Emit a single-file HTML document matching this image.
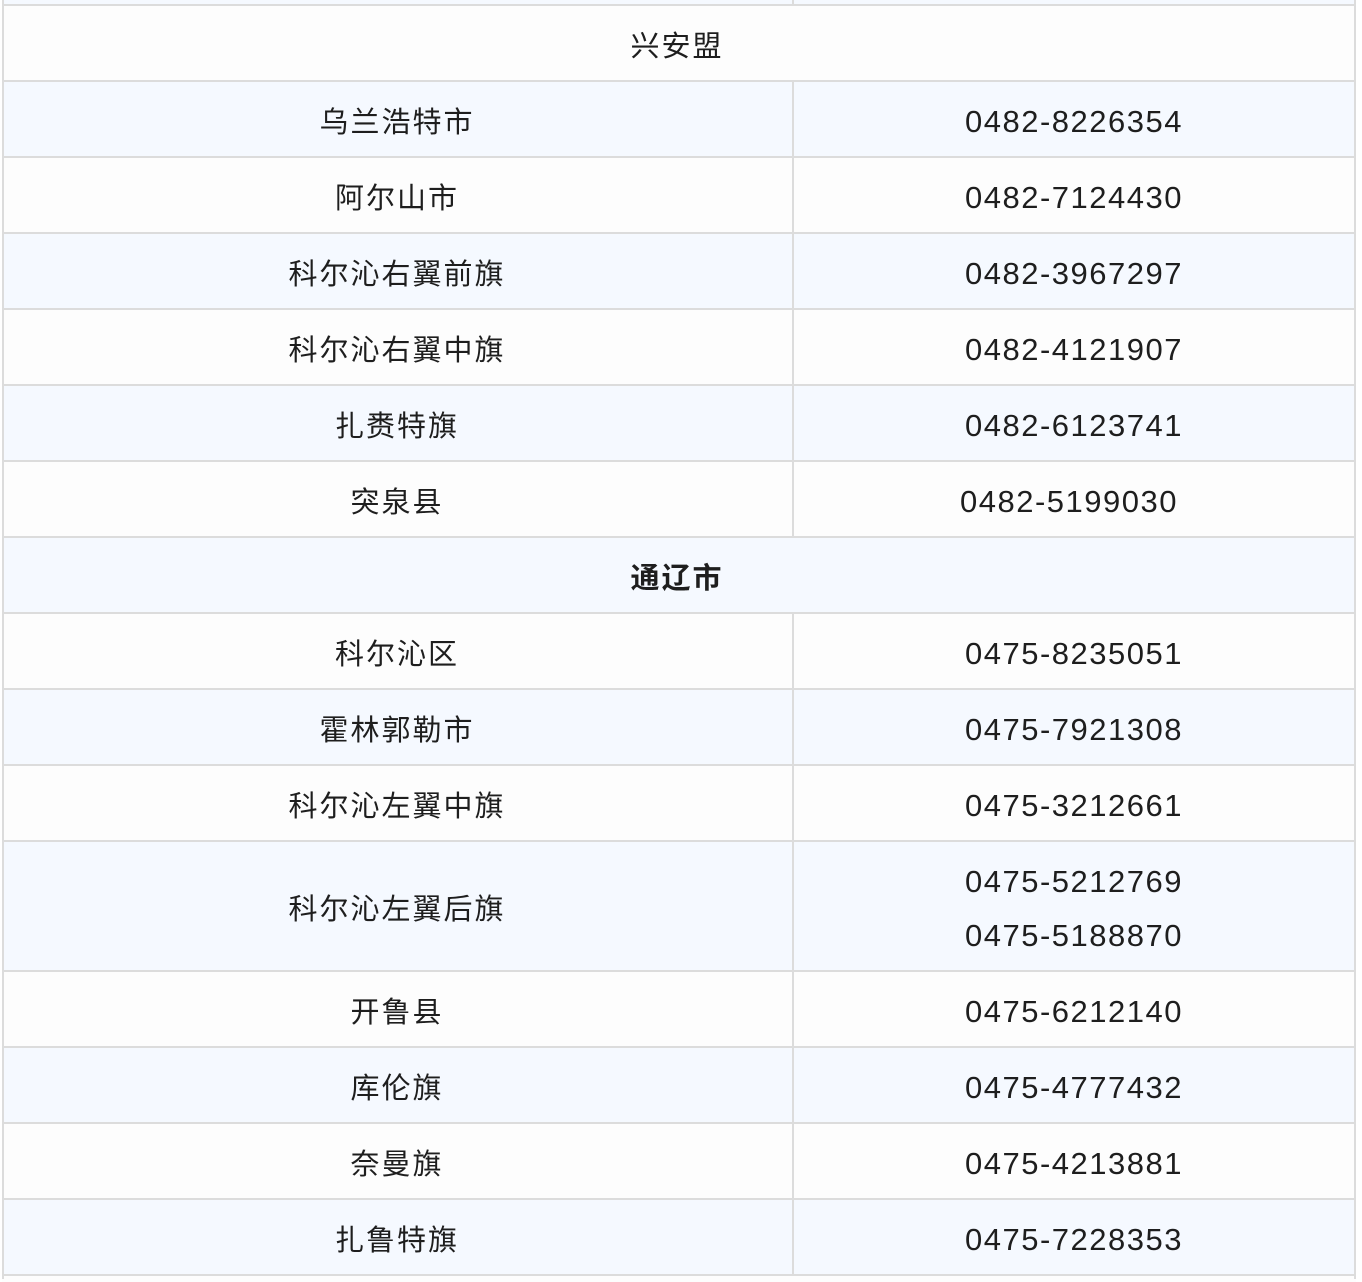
<!DOCTYPE html>
<html><head><meta charset="utf-8"><style>
body{margin:0;width:1362px;height:1279px;background:#fff;position:relative;overflow:hidden;font-family:"Liberation Sans","Noto Sans CJK SC",sans-serif;color:#1e1e1e;}
.r{position:absolute;left:2px;width:1354px;border-top:2px solid #dcdcdc;box-sizing:border-box;}
.w{background:#fdfdfd}.b{background:#f5f9ff}
.c{position:absolute;top:0;bottom:0;display:flex;align-items:center;justify-content:center;flex-direction:column;font-size:29px;letter-spacing:2px;padding-top:2px;box-sizing:border-box}
.l{left:0;width:790px}.rt{left:790px;width:562px;border-left:2px solid #dcdcdc;font-size:31px;letter-spacing:1.5px;padding-top:5px}
.f{left:0;width:1350px}
.v{position:absolute;left:2px;top:0;width:2px;height:1279px;background:#dcdcdc}
.v2{position:absolute;left:1354px;top:0;width:2px;height:1279px;background:#dcdcdc}
.rt span{line-height:54px}
</style></head><body>
<div class="r b" style="top:-2px;height:6px"><div class="rt c"></div></div>
<div class="r w" style="top:4px;height:76px"><div class="c f">兴安盟</div></div>
<div class="r b" style="top:80px;height:76px"><div class="c l">乌兰浩特市</div><div class="c rt">0482-8226354</div></div>
<div class="r w" style="top:156px;height:76px"><div class="c l">阿尔山市</div><div class="c rt">0482-7124430</div></div>
<div class="r b" style="top:232px;height:76px"><div class="c l">科尔沁右翼前旗</div><div class="c rt">0482-3967297</div></div>
<div class="r w" style="top:308px;height:76px"><div class="c l">科尔沁右翼中旗</div><div class="c rt">0482-4121907</div></div>
<div class="r b" style="top:384px;height:76px"><div class="c l">扎赉特旗</div><div class="c rt">0482-6123741</div></div>
<div class="r w" style="top:460px;height:76px"><div class="c l">突泉县</div><div class="c rt"><span style="position:relative;left:-5px;line-height:normal">0482-5199030</span></div></div>
<div class="r b" style="top:536px;height:76px"><div class="c f" style="font-weight:bold">通辽市</div></div>
<div class="r w" style="top:612px;height:76px"><div class="c l">科尔沁区</div><div class="c rt">0475-8235051</div></div>
<div class="r b" style="top:688px;height:76px"><div class="c l">霍林郭勒市</div><div class="c rt">0475-7921308</div></div>
<div class="r w" style="top:764px;height:76px"><div class="c l">科尔沁左翼中旗</div><div class="c rt">0475-3212661</div></div>
<div class="r b" style="top:840px;height:130px"><div class="c l">科尔沁左翼后旗</div><div class="c rt"><span>0475-5212769</span><span>0475-5188870</span></div></div>
<div class="r w" style="top:970px;height:76px"><div class="c l">开鲁县</div><div class="c rt">0475-6212140</div></div>
<div class="r b" style="top:1046px;height:76px"><div class="c l">库伦旗</div><div class="c rt">0475-4777432</div></div>
<div class="r w" style="top:1122px;height:76px"><div class="c l">奈曼旗</div><div class="c rt">0475-4213881</div></div>
<div class="r b" style="top:1198px;height:76px"><div class="c l">扎鲁特旗</div><div class="c rt">0475-7228353</div></div>
<div class="r w" style="top:1274px;height:8px"></div>
<div class="v"></div><div class="v2"></div>
</body></html>
